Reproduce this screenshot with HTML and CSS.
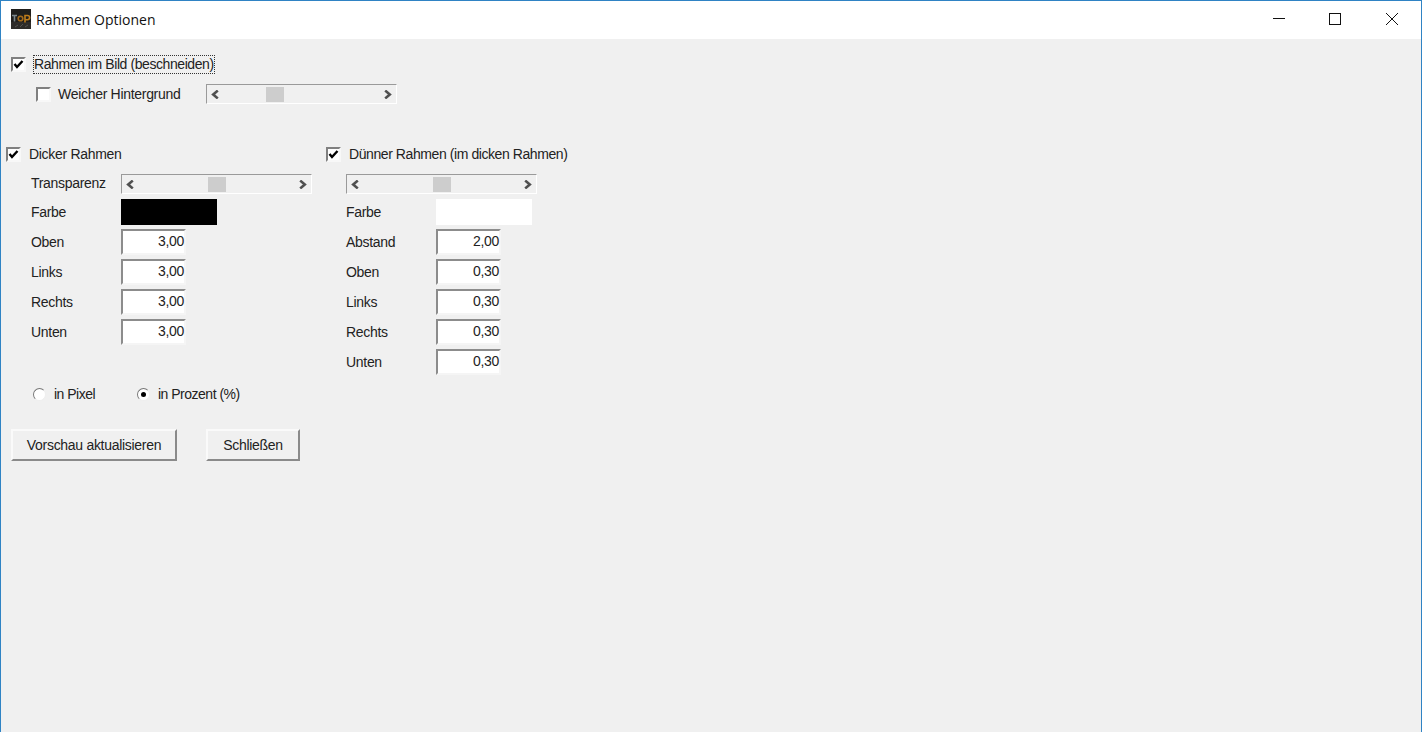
FILE: index.html
```html
<!DOCTYPE html>
<html lang="de">
<head>
<meta charset="utf-8">
<title>Rahmen Optionen</title>
<link rel="stylesheet" href="styles.css">
</head>
<body>
<div class="window">
  <header class="titlebar">
    <svg class="appicon" width="20" height="20" viewBox="0 0 20 20">
      <rect width="20" height="20" fill="#1f1e1c"/>
      <rect y="13" width="20" height="7" fill="#2e2c29"/>
      <path d="M1 6.500h5M3.500 6.500v6" stroke="#7b868b" stroke-width="1.600" fill="none"/>
      <circle cx="9.500" cy="9.500" r="2.300" stroke="#a36a1c" stroke-width="1.600" fill="none"/>
      <path d="M14 13.500V6.500h2.500a2 2 0 0 1 0 4.200H14" stroke="#bf7d1b" stroke-width="1.600" fill="none"/>
      <path d="M4 18l3-2M9 18l3-3M14 18l3-2" stroke="#54524e" stroke-width="1"/>
    </svg>
    <span class="title">Rahmen Optionen</span>
    <div class="caption">
      <svg class="capbtn" width="58" height="38" viewBox="0 0 58 38"><path d="M26 18.500h12" stroke="#111" fill="none"/></svg>
      <svg class="capbtn" width="58" height="38" viewBox="0 0 58 38"><rect x="24.500" y="13.500" width="11" height="11" stroke="#111" fill="none"/></svg>
      <svg class="capbtn" width="58" height="38" viewBox="0 0 58 38"><path d="M23 13l12 12M35 13L23 25" stroke="#111" fill="none"/></svg>
    </div>
  </header>
  <main class="client">
    <section class="top">
      <div class="row">
        <span class="check"><svg width="11" height="11" viewBox="0 0 11 11"><path d="M1.500 5l2.500 3 5.500-6" stroke="#000" stroke-width="2.400" fill="none"/></svg></span>
        <span class="lbl focus">Rahmen im Bild (beschneiden)</span>
      </div>
      <div class="row sub">
        <span class="check"></span>
        <span class="lbl soft">Weicher Hintergrund</span>
        <div class="scroll">
          <svg class="arrow" width="9" height="9" viewBox="0 0 9 9"><path d="M6.800 .6L2.200 4.500l4.600 3.900" stroke="#505050" stroke-width="2.600" fill="none"/></svg>
          <span class="thumb t-soft"></span>
          <svg class="arrow" width="9" height="9" viewBox="0 0 9 9"><path d="M2.200 .6l4.600 3.900-4.600 3.900" stroke="#505050" stroke-width="2.600" fill="none"/></svg>
        </div>
      </div>
    </section>
    <section class="columns">
      <div class="col">
        <div class="row">
          <span class="check"><svg width="11" height="11" viewBox="0 0 11 11"><path d="M1.500 5l2.500 3 5.500-6" stroke="#000" stroke-width="2.400" fill="none"/></svg></span>
          <span class="lbl">Dicker Rahmen</span>
        </div>
        <div class="form form-a">
          <span class="name">Transparenz</span>
          <div class="scroll first">
            <svg class="arrow" width="9" height="9" viewBox="0 0 9 9"><path d="M6.800 .6L2.200 4.500l4.600 3.900" stroke="#505050" stroke-width="2.600" fill="none"/></svg>
            <span class="thumb t-a"></span>
            <svg class="arrow" width="9" height="9" viewBox="0 0 9 9"><path d="M2.200 .6l4.600 3.900-4.600 3.900" stroke="#505050" stroke-width="2.600" fill="none"/></svg>
          </div>
          <span class="name">Farbe</span><span class="swatch black"></span>
          <span class="name">Oben</span><span class="edit">3,00</span>
          <span class="name">Links</span><span class="edit">3,00</span>
          <span class="name">Rechts</span><span class="edit">3,00</span>
          <span class="name">Unten</span><span class="edit">3,00</span>
        </div>
      </div>
      <div class="col">
        <div class="row">
          <span class="check"><svg width="11" height="11" viewBox="0 0 11 11"><path d="M1.500 5l2.500 3 5.500-6" stroke="#000" stroke-width="2.400" fill="none"/></svg></span>
          <span class="lbl long">Dünner Rahmen (im dicken Rahmen)</span>
        </div>
        <div class="form form-b">
          <div class="scroll first spanning">
            <svg class="arrow" width="9" height="9" viewBox="0 0 9 9"><path d="M6.800 .6L2.200 4.500l4.600 3.900" stroke="#505050" stroke-width="2.600" fill="none"/></svg>
            <span class="thumb t-b"></span>
            <svg class="arrow" width="9" height="9" viewBox="0 0 9 9"><path d="M2.200 .6l4.600 3.900-4.600 3.900" stroke="#505050" stroke-width="2.600" fill="none"/></svg>
          </div>
          <span class="name">Farbe</span><span class="swatch white"></span>
          <span class="name">Abstand</span><span class="edit">2,00</span>
          <span class="name">Oben</span><span class="edit">0,30</span>
          <span class="name">Links</span><span class="edit">0,30</span>
          <span class="name">Rechts</span><span class="edit">0,30</span>
          <span class="name">Unten</span><span class="edit">0,30</span>
        </div>
      </div>
    </section>
    <section class="units">
      <span class="radio"></span><span class="lbl unit unit-a">in Pixel</span>
      <span class="radio on"></span><span class="lbl unit">in Prozent (%)</span>
    </section>
    <section class="actions">
      <span class="btn wide">Vorschau aktualisieren</span>
      <span class="btn close">Schließen</span>
    </section>
  </main>
</div>
</body>
</html>
```

FILE: styles.css
```css
* { box-sizing: border-box; }
html, body { margin: 0; height: 100%; overflow: hidden; }
body { background: #f0f0f0; font-family: "Liberation Sans", Arial, sans-serif; font-size: 14px; letter-spacing: -0.3px; color: #222; }
.window { height: 732px; display: flex; flex-direction: column; border-top: 1px solid #2f83c4; border-left: 1px solid #2f83c4; border-right: 1px solid #2f83c4; }
.titlebar { height: 38px; flex: none; background: #fff; display: flex; align-items: center; padding: 0 0 2px 10px; }
.appicon { flex: none; }
.title { margin-left: 5px; font-family: "Open Sans", sans-serif; font-size: 14px; letter-spacing: 0; color: #111; }
.caption { margin-left: auto; display: flex; }
.capbtn { display: block; flex: none; }
.client { flex: 1; background: #f0f0f0; }
.row { display: flex; align-items: center; height: 30px; }
.top { padding: 10px 0 0 10px; }
.sub { padding-left: 25px; }
.check { width: 15px; height: 15px; flex: none; background: #fff; border: 2px solid; border-color: #808080 #f8f8f8 #f8f8f8 #808080; display: block; }
.check svg { display: block; }
.lbl { margin-left: 8px; white-space: nowrap; line-height: 16px; }
.focus { margin-left: 7px; border: 1px dotted #333; line-height: 17px; letter-spacing: -0.42px; }
.long { letter-spacing: -0.42px; }
.soft { margin-left: 7px; width: 148px; flex: none; }
.scroll { width: 191px; height: 20px; display: flex; align-items: center; justify-content: space-between; padding: 0 4px; background: #f0f0f0; border: 1px solid; border-color: #9a9a9a #fff #fff #9a9a9a; position: relative; }
.first { align-self: start; margin-top: 5px; }
.spanning { grid-column: 1 / -1; }
.arrow { display: block; flex: none; }
.thumb { position: absolute; top: 2px; width: 18px; height: 15px; background: #cdcdcd; }
.t-soft { left: 59px; }
.t-a { left: 86px; }
.t-b { left: 86px; }
.columns { display: flex; padding-top: 30px; }
.col { flex: none; width: 320px; padding-left: 5px; }
.form { display: grid; grid-template-columns: 90px 191px; grid-template-rows: 28px; grid-auto-rows: 30px; align-items: center; }
.form-a { padding-left: 25px; }
.form-b { padding-left: 20px; }
.name { line-height: 16px; white-space: nowrap; }
.swatch { display: block; width: 96px; height: 26px; }
.black { background: #000; }
.white { background: #fff; }
.edit { display: block; width: 65px; height: 26px; background: #fff; border: 2px solid; border-color: #8c8c8c #f5f5f5 #f5f5f5 #8c8c8c; text-align: right; line-height: 20px; }
.units { display: flex; align-items: center; height: 30px; padding-left: 32px; margin-top: 2px; }
.radio { width: 13px; height: 13px; border-radius: 50%; background: #fff; border: 1px solid; border-color: #777 #eee #eee #777; flex: none; position: relative; }
.radio.on::after { content: ""; position: absolute; left: 3px; top: 3px; width: 5px; height: 5px; border-radius: 50%; background: #000; }
.unit { letter-spacing: -0.5px; }
.unit-a { width: 83px; flex: none; }
.actions { display: flex; padding: 20px 0 0 10px; gap: 29px; }
.btn { display: flex; align-items: center; justify-content: center; height: 32px; background: #f0f0f0; border: 2px solid; border-color: #fafafa #8a8a8a #8a8a8a #fafafa; white-space: nowrap; }
.wide { width: 166px; }
.close { width: 94px; }
```
